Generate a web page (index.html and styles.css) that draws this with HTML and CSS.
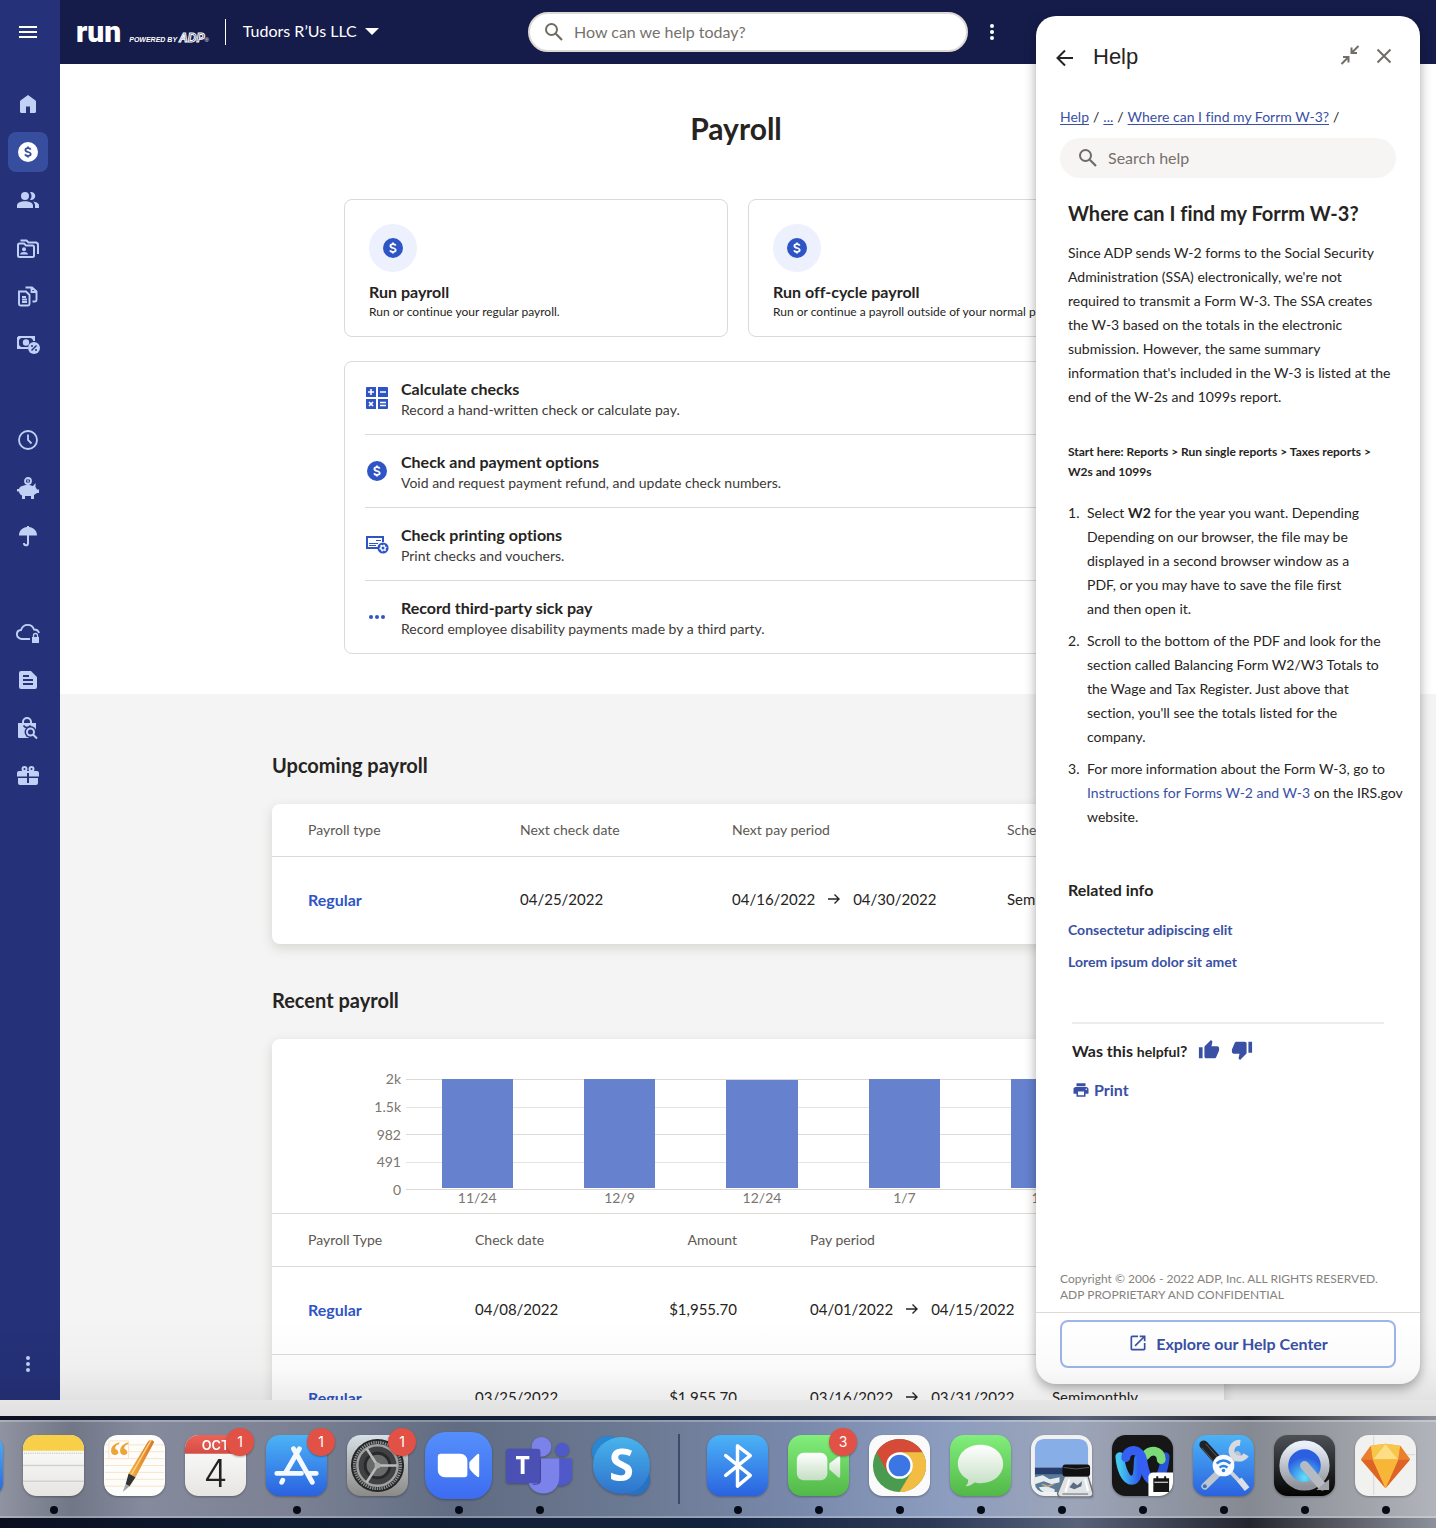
FILE: index.html
```
<!DOCTYPE html>
<html lang="en">

<head>
  <meta charset="UTF-8">
  <meta name="viewport" content="width=device-width, initial-scale=1.0">
  <title>Payroll</title>
  <link rel="stylesheet" href="styles.css">
</head>

<body>
  <!-- shared symbols and gradients -->
  <svg class="defs" width="0" height="0" aria-hidden="true">
    <symbol id="i-dollar" viewBox="0 0 24 24">
      <circle cx="12" cy="12" r="10" fill="currentColor" />
      <path d="M14.7 9.6C14.4 8.7 13.4 8.2 12 8.2c-1.500 0-2.600.6-2.600 1.800 0 2.700 5.300 1.300 5.300 4 0 1.200-1.100 1.900-2.700 1.900-1.500 0-2.600-.6-2.800-1.600M12 6.500v2M12 15.500v2" fill="none" stroke="var(--mark)" stroke-width="1.800" />
    </symbol>
    <symbol id="i-search" viewBox="0 0 24 24">
      <circle cx="9.500" cy="9.500" r="5.500" fill="none" stroke="currentColor" stroke-width="2" />
      <path d="M13.800 13.800l6.200 6.200" stroke="currentColor" stroke-width="2.200" />
    </symbol>
    <symbol id="i-dots" viewBox="0 0 24 24">
      <g fill="currentColor"><circle cx="12" cy="6" r="2" /><circle cx="12" cy="12" r="2" /><circle cx="12" cy="18" r="2" /></g>
    </symbol>
    <symbol id="i-arrow" viewBox="0 0 16 16">
      <path d="M2 8h11M8.500 3.500L13 8l-4.500 4.500" fill="none" stroke="currentColor" stroke-width="1.400" />
    </symbol>
    <symbol id="i-thumb" viewBox="0 0 24 24">
      <path d="M1 21h4V9H1v12zM23 10c0-1.100-.9-2-2-2h-6.310l.95-4.570.03-.32c0-.41-.17-.79-.44-1.060L14.170 1 7.590 7.590C7.220 7.950 7 8.450 7 9v10c0 1.100.9 2 2 2h9c.83 0 1.540-.5 1.840-1.220l3.020-7.050c.09-.23.14-.47.14-.73v-2z" fill="currentColor" />
    </symbol>
    <defs>
      <linearGradient id="g-blue" x2="0" y2="1"><stop stop-color="#4cb3f6" /><stop offset="1" stop-color="#2a62e0" /></linearGradient>
      <linearGradient id="g-zoom" x2="0" y2="1"><stop stop-color="#558ffb" /><stop offset="1" stop-color="#3d6cf1" /></linearGradient>
      <linearGradient id="g-green" x2="0" y2="1"><stop stop-color="#82ee7c" /><stop offset="1" stop-color="#52b848" /></linearGradient>
      <linearGradient id="g-white" x2="0" y2="1"><stop stop-color="#fff" /><stop offset="1" stop-color="#c4dec3" /></linearGradient>
      <linearGradient id="g-paper" x2="0" y2="1"><stop stop-color="#fff" /><stop offset="1" stop-color="#e6e5e1" /></linearGradient>
      <linearGradient id="g-steel" x2="0" y2="1"><stop stop-color="#d6e0e6" /><stop offset="1" stop-color="#8b8a86" /></linearGradient>
      <linearGradient id="g-black" x2="0" y2="1"><stop stop-color="#4d5156" /><stop offset="1" stop-color="#030303" /></linearGradient>
      <linearGradient id="g-red" x2="0" y2="1"><stop stop-color="#ed6358" /><stop offset="1" stop-color="#d44c43" /></linearGradient>
      <linearGradient id="g-skype" x2="0" y2="1"><stop stop-color="#48b4ec" /><stop offset="1" stop-color="#2f72cc" /></linearGradient>
      <linearGradient id="g-silver" x2="0" y2="1"><stop stop-color="#eaf0fb" /><stop offset="1" stop-color="#8f9298" /></linearGradient>
      <linearGradient id="g-webex" x2="1" y2="0"><stop stop-color="#45c8ef" /><stop offset="1" stop-color="#2f5ff0" /></linearGradient>
      <linearGradient id="g-pen" x2="1" y2="0"><stop stop-color="#f7b13c" /><stop offset="1" stop-color="#d5762a" /></linearGradient>
      <radialGradient id="g-aqua" cy=".8"><stop stop-color="#5fe3fb" /><stop offset="1" stop-color="#2b5fe0" /></radialGradient>
    </defs>
  </svg>

  <div class="desktop">
    <div class="window">
      <div class="app">
        <nav class="sidebar" aria-label="Main">
          <button class="nav-btn menu" aria-label="Menu">
            <svg viewBox="0 0 24 24"><path d="M3 7h18M3 12h18M3 17h18" stroke="currentColor" stroke-width="2" /></svg>
          </button>

          <div class="nav-group">
            <button class="nav-btn" aria-label="Home">
              <svg viewBox="0 0 24 24"><path d="M12 3l7.500 5.500a1.200 1.200 0 0 1 .5 1V19.500a1.500 1.500 0 0 1-1.500 1.500H14v-6.500h-4V21H5.500A1.500 1.500 0 0 1 4 19.500v-10a1.200 1.200 0 0 1 .5-1z" fill="currentColor" /></svg>
            </button>
            <button class="nav-btn active" aria-label="Payroll">
              <svg><use href="#i-dollar" /></svg>
            </button>
            <button class="nav-btn" aria-label="Employees">
              <svg viewBox="0 0 24 24"><g fill="currentColor"><circle cx="9" cy="8" r="4" /><path d="M1 20v-2.500C1 14.500 5.500 13.300 9 13.300s8 1.200 8 4.200V20zM14 4.200a4 4 0 1 1 0 7.600 6 6 0 0 0 0-7.600zM17 13.600c3 .4 6 1.700 6 3.900V20h-4v-2.500c0-1.700-.8-3-2-3.900z" /></g></svg>
            </button>
            <button class="nav-btn" aria-label="Employee files">
              <svg viewBox="0 0 24 24"><path d="M2 19.500V9a1.500 1.500 0 0 1 1.500-1.500H8l2 2h6.500A1.500 1.500 0 0 1 18 11v8.500a1.500 1.500 0 0 1-1.500 1.500h-13A1.500 1.500 0 0 1 2 19.500zM4.500 4.500h6l2 2H20A2.500 2.500 0 0 1 22 9v9" fill="none" stroke="currentColor" stroke-width="2" /><circle cx="8" cy="13.200" r="2" fill="currentColor" /><path d="M4 18.500c0-3.300 8-3.300 8 0z" fill="currentColor" /></svg>
            </button>
            <button class="nav-btn" aria-label="Documents">
              <svg viewBox="0 0 24 24"><path d="M3 20V7.500h7l3.500 3.500V20a1.500 1.500 0 0 1-1.500 1.500H4.500A1.500 1.500 0 0 1 3 20zM6 13h4M6 15.500h5M6 18h5M9.500 3.500H16l4.500 4V16a1.500 1.500 0 0 1-1.500 1.500h-2.500M15.500 3.500V8H20" fill="none" stroke="currentColor" stroke-width="1.900" /></svg>
            </button>
            <button class="nav-btn" aria-label="Taxes">
              <svg viewBox="0 0 24 24"><path d="M2 5h16v4M12 16H2V5" fill="none" stroke="currentColor" stroke-width="2" /><path d="M2 5h4L2 9zM18 5h-4l4 4zM2 16h4l-4-4z" fill="currentColor" /><circle cx="10" cy="10.500" r="3.200" fill="currentColor" /><circle cx="18" cy="16" r="6" fill="currentColor" /><path d="M15.500 18.500l5-5" stroke="#253178" stroke-width="1.500" /><circle cx="16" cy="14" r="1" fill="#253178" /><circle cx="20" cy="18" r="1" fill="#253178" /></svg>
            </button>
          </div>

          <div class="nav-group">
            <button class="nav-btn" aria-label="Time">
              <svg viewBox="0 0 24 24"><circle cx="12" cy="12" r="9" fill="none" stroke="currentColor" stroke-width="1.800" /><path d="M12 6.500V12l3.500 3.500" fill="none" stroke="currentColor" stroke-width="1.800" /></svg>
            </button>
            <button class="nav-btn" aria-label="Retirement">
              <svg viewBox="0 0 24 24"><circle cx="12" cy="5" r="3" fill="none" stroke="currentColor" stroke-width="1.800" /><path d="M13 4.200c-1.800-.8-2.400.5-1 .9s.8 1.600-1 .8" fill="none" stroke="currentColor" /><path d="M6 10c3-1.500 8-1.500 11 0l2.500-3v4l1.500 2.500h2V17h-2l-3 2v4h-3v-3H9v3H6v-3.500C4 18.500 3 17 3 15.500H1V13h2c.4-1.300 1.300-2.300 3-3z" fill="currentColor" /></svg>
            </button>
            <button class="nav-btn" aria-label="Insurance">
              <svg viewBox="0 0 24 24"><path d="M3 11.500C3 6 7 3.500 11 3V2h2v1c4 .5 8 3 8 8.500z" fill="currentColor" /><path d="M12 11v8.500c0 2.500-4 2.500-4-.5" fill="none" stroke="currentColor" stroke-width="2" /></svg>
            </button>
          </div>

          <div class="nav-group">
            <button class="nav-btn" aria-label="Secure cloud">
              <svg viewBox="0 0 24 24"><path d="M14 19H5.500C-.5 18-.5 10.500 5 10 7.500 3 16 3.500 18 9.500c3 0 4.500 1.500 5 3.500" fill="none" stroke="currentColor" stroke-width="1.900" /><path d="M16 17h7v6h-7z" fill="currentColor" /><path d="M17.500 17.500v-2a2 2 0 0 1 4 0v2" fill="none" stroke="currentColor" stroke-width="1.300" /></svg>
            </button>
            <button class="nav-btn" aria-label="Reports">
              <svg viewBox="0 0 24 24"><path d="M5 3h10l6 6v10a2 2 0 0 1-2 2H5a2 2 0 0 1-2-2V5a2 2 0 0 1 2-2zM7 7v2h6V7zM7 11v2h10v-2zM7 15v2h10v-2z" fill="currentColor" fill-rule="evenodd" /></svg>
            </button>
            <button class="nav-btn" aria-label="Hiring">
              <svg viewBox="0 0 24 24"><path d="M2 7h18v7H13v8H3a1 1 0 0 1-1-1z" fill="currentColor" /><path d="M7 9V6a4 4 0 0 1 8 0v3" fill="none" stroke="currentColor" stroke-width="2" /><path d="M7.500 9.500c1.500 2.500 5.500 2.500 7 0" stroke="#253178" stroke-width="1.500" fill="none" /><circle cx="14.500" cy="16" r="6" fill="#253178" /><circle cx="14.500" cy="16" r="3.500" fill="none" stroke="currentColor" stroke-width="2" /><path d="M17 18.500l4 4" stroke="currentColor" stroke-width="2" /></svg>
            </button>
            <button class="nav-btn" aria-label="Perks">
              <svg viewBox="0 0 24 24"><path d="M1 9a2 2 0 0 1 2-2h18a2 2 0 0 1 2 2v3.500H13V9h-2v3.500H1zM2 14h9v5h2v-5h9v5a2 2 0 0 1-2 2H4a2 2 0 0 1-2-2z" fill="currentColor" /><circle cx="8.500" cy="5" r="2" fill="none" stroke="currentColor" stroke-width="2" /><circle cx="15.500" cy="5" r="2" fill="none" stroke="currentColor" stroke-width="2" /></svg>
            </button>
          </div>

          <button class="nav-btn more" aria-label="More"><svg><use href="#i-dots" /></svg></button>
        </nav>

        <div class="content">
          <header class="topbar">
            <div class="brand">
              <a href="#" class="logo">
                <span class="logo-run">run</span>
                <span class="logo-powered">POWERED BY</span>
                <span class="logo-adp">ADP</span>
                <span class="logo-reg">®</span>
              </a>
              <button class="company">Tudors R’Us LLC <span class="caret"></span></button>
            </div>
            <label class="top-search">
              <svg><use href="#i-search" /></svg>
              <input type="search" placeholder="How can we help today?" aria-label="How can we help today?">
            </label>
            <button class="top-more" aria-label="More options"><svg><use href="#i-dots" /></svg></button>
          </header>

          <main>
            <section class="intro">
              <h1>Payroll</h1>
              <div class="cards">
                <a href="#" class="card">
                  <span class="card-icon"><svg><use href="#i-dollar" /></svg></span>
                  <strong>Run payroll</strong>
                  <small>Run or continue your regular payroll.</small>
                </a>
                <a href="#" class="card">
                  <span class="card-icon"><svg><use href="#i-dollar" /></svg></span>
                  <strong>Run off-cycle payroll</strong>
                  <small>Run or continue a payroll outside of your normal pay schedule.</small>
                </a>
              </div>
              <ul class="options">
                <li>
                  <svg viewBox="0 0 24 24"><path d="M1 2a1 1 0 0 1 1-1h9v10H1zM13 1h9a1 1 0 0 1 1 1v9H13zM1 13h10v10H2a1 1 0 0 1-1-1zM13 13h10v9a1 1 0 0 1-1 1h-9z" fill="currentColor" /><path d="M3 6h6M6 3v6M15 6h6M4 16l4 4M8 16l-4 4M15 16.500h6M15 19.500h6" stroke="#fff" stroke-width="1.600" /></svg>
                  <div><a href="#">Calculate checks</a><p>Record a hand-written check or calculate pay.</p></div>
                </li>
                <li>
                  <svg><use href="#i-dollar" /></svg>
                  <div><a href="#">Check and payment options</a><p>Void and request payment refund, and update check numbers.</p></div>
                </li>
                <li>
                  <svg viewBox="0 0 24 24"><path d="M13 16H2V5h16v5" fill="none" stroke="currentColor" stroke-width="2" /><path d="M11 8.500h5M4 11.500h9M4 13.500h7" stroke="currentColor" stroke-width="1.200" /><circle cx="18" cy="16" r="4.600" fill="#fff" stroke="currentColor" stroke-width="2" /><circle cx="18" cy="16" r="3.600" fill="none" stroke="currentColor" stroke-dasharray="1.900 1.870" stroke-width="1.500" /><circle cx="18" cy="16" r="1.500" fill="currentColor" /></svg>
                  <div><a href="#">Check printing options</a><p>Print checks and vouchers.</p></div>
                </li>
                <li>
                  <svg viewBox="0 0 24 24"><g fill="currentColor"><circle cx="6" cy="12" r="2" /><circle cx="12" cy="12" r="2" /><circle cx="18" cy="12" r="2" /></g></svg>
                  <div><a href="#">Record third-party sick pay</a><p>Record employee disability payments made by a third party.</p></div>
                </li>
              </ul>
            </section>

            <section class="history">
              <h2>Upcoming payroll</h2>
              <div class="panel">
                <table class="upcoming">
                  <thead>
                    <tr><th>Payroll type</th><th>Next check date</th><th>Next pay period</th><th>Schedule</th></tr>
                  </thead>
                  <tbody>
                    <tr>
                      <td><a href="#">Regular</a></td>
                      <td>04/25/2022</td>
                      <td><span class="period">04/16/2022 <svg><use href="#i-arrow" /></svg> 04/30/2022</span></td>
                      <td>Semimonthly</td>
                    </tr>
                  </tbody>
                </table>
              </div>

              <h2>Recent payroll</h2>
              <div class="panel">
                <div class="chart">
                  <div class="y-axis"><span>2k</span><span>1.5k</span><span>982</span><span>491</span><span>0</span></div>
                  <div class="plot">
                    <div class="bar" style="height: 100%"></div>
                    <div class="bar" style="height: 100%"></div>
                    <div class="bar" style="height: 99%"></div>
                    <div class="bar" style="height: 100%"></div>
                    <div class="bar" style="height: 100%"></div>
                  </div>
                  <div class="x-axis"><span>11/24</span><span>12/9</span><span>12/24</span><span>1/7</span><span>1/24</span></div>
                </div>
                <table class="recent">
                  <thead>
                    <tr><th>Payroll Type</th><th>Check date</th><th>Amount</th><th>Pay period</th><th>Schedule</th></tr>
                  </thead>
                  <tbody>
                    <tr>
                      <td><a href="#">Regular</a></td>
                      <td>04/08/2022</td>
                      <td>$1,955.70</td>
                      <td><span class="period">04/01/2022 <svg><use href="#i-arrow" /></svg> 04/15/2022</span></td>
                      <td>Semimonthly</td>
                    </tr>
                    <tr>
                      <td><a href="#">Regular</a></td>
                      <td>03/25/2022</td>
                      <td>$1,955.70</td>
                      <td><span class="period">03/16/2022 <svg><use href="#i-arrow" /></svg> 03/31/2022</span></td>
                      <td>Semimonthly</td>
                    </tr>
                  </tbody>
                </table>
              </div>
            </section>
          </main>
        </div>

        <aside class="help">
          <header class="help-head">
            <button aria-label="Back"><svg viewBox="0 0 24 24"><path d="M20 13H5M12 5.500L4.500 13l7.500 7.500" fill="none" stroke="currentColor" stroke-width="2" /></svg></button>
            <h2>Help</h2>
            <button class="grey" aria-label="Collapse"><svg viewBox="0 0 24 24"><path d="M5 12h5.500v5.500M10.500 12l-7 7M19 8h-5.500V2.500M13.500 8l7-7" fill="none" stroke="currentColor" stroke-width="2" /></svg></button>
            <button class="grey" aria-label="Close"><svg viewBox="0 0 24 24"><path d="M5.500 4.500l13 13M18.500 4.500l-13 13" stroke="currentColor" stroke-width="2" /></svg></button>
          </header>
          <nav class="crumbs" aria-label="Breadcrumb">
            <a href="#">Help</a><span>/</span><a href="#">...</a><span>/</span><a href="#">Where can I find my Forrm W-3?</a><span>/</span>
          </nav>
          <label class="help-search">
            <svg><use href="#i-search" /></svg>
            <input type="search" placeholder="Search help" aria-label="Search help">
          </label>

          <article>
            <h3>Where can I find my Forrm W-3?</h3>
            <p class="lead">Since ADP sends W-2 forms to the Social Security<br>
              Administration (SSA) electronically, we're not<br>
              required to transmit a Form W-3. The SSA creates<br>
              the W-3 based on the totals in the electronic<br>
              submission. However, the same summary<br>
              information that's included in the W-3 is listed at the<br>
              end of the W-2s and 1099s report.</p>
            <p class="start">Start here: Reports &gt; Run single reports &gt; Taxes reports &gt;<br>W2s and 1099s</p>
            <ol>
              <li>Select <b>W2</b> for the year you want. Depending<br>
                Depending on our browser, the file may be<br>
                displayed in a second browser window as a<br>
                PDF, or you may have to save the file first<br>
                and then open it.</li>
              <li>Scroll to the bottom of the PDF and look for the<br>
                section called Balancing Form W2/W3 Totals to<br>
                the Wage and Tax Register. Just above that<br>
                section, you'll see the totals listed for the<br>
                company.</li>
              <li>For more information about the Form W-3, go to<br>
                <a href="#">Instructions for Forms W-2 and W-3</a> on the IRS.gov<br>
                website.</li>
            </ol>
            <h4>Related info</h4>
            <ul class="related">
              <li><a href="#">Consectetur adipiscing elit</a></li>
              <li><a href="#">Lorem ipsum dolor sit amet</a></li>
            </ul>
          </article>

          <div class="feedback">
            <div class="helpful">
              <span>Was this <small>helpful</small>?</span>
              <button aria-label="Yes"><svg><use href="#i-thumb" /></svg></button>
              <button class="down" aria-label="No"><svg><use href="#i-thumb" /></svg></button>
            </div>
            <button class="print">
              <svg viewBox="0 0 24 24"><path d="M19 8H5c-1.660 0-3 1.340-3 3v6h4v4h12v-4h4v-6c0-1.660-1.340-3-3-3zm-3 11H8v-5h8v5zm3-7a1 1 0 1 1 0-2 1 1 0 0 1 0 2zM18 3H6v4h12z" fill="currentColor" /></svg>Print
            </button>
          </div>

          <p class="copyright">Copyright © 2006 - 2022 ADP, Inc. ALL RIGHTS RESERVED.<br>ADP PROPRIETARY AND CONFIDENTIAL</p>
          <footer>
            <button class="explore">
              <svg viewBox="0 0 24 24"><path d="M19 19H5V5h7V3H5a2 2 0 0 0-2 2v14c0 1.100.89 2 2 2h14c1.100 0 2-.9 2-2v-7h-2v7zM14 3v2h3.590l-9.830 9.830 1.410 1.410L19 6.410V10h2V3h-7z" fill="currentColor" /></svg>
              Explore our Help Center
            </button>
          </footer>
        </aside>
      </div>
    </div>

    <div class="dock">
      <div class="dock-item"><svg viewBox="0 0 64 64"><rect x="1" y="1" width="62" height="62" rx="14" fill="url(#g-blue)" /></svg></div>
      <!-- Notes -->
      <div class="dock-item running"><svg viewBox="0 0 64 64"><rect x="1" y="1" width="62" height="62" rx="14" fill="url(#g-paper)" /><path d="M1 17v-2A14 14 0 0 1 15 1h34a14 14 0 0 1 14 14v2z" fill="#f7cf48" /><path d="M2 19.500h60" stroke="#b7b5ad" stroke-dasharray="1 1.200" /><path d="M1 32h62M1 48h62" stroke="#d3d2cf" stroke-width="1.500" /></svg></div>
      <!-- Pages -->
      <div class="dock-item"><svg viewBox="0 0 64 64"><rect x="1" y="1" width="62" height="62" rx="14" fill="#fdfdfc" /><path d="M2 11h60M2 18h60M2 25h60M2 32h60M2 39h60M2 46h60M2 53h60" stroke="#fae3c6" /><path d="M6 7h20v18H6z" fill="#fdfdfc" stroke="#fae3c6" /><text x="6" y="37" font-family="Liberation Serif" font-weight="bold" font-size="42" fill="#efa43a">“</text><path d="M46 7q4-2 6 1L33 44l-7-4z" fill="url(#g-pen)" /><path d="M49 6L29 41" stroke="#fbd08a" stroke-width="1.500" /><path d="M26 40l7 4-6 9-4-2z" fill="#333" /><path d="M23 51l4 2-7 6z" fill="#9aa4aa" /></svg></div>
      <!-- Calendar -->
      <div class="dock-item"><svg viewBox="0 0 64 64"><rect x="1" y="1" width="62" height="62" rx="14" fill="url(#g-paper)" /><path d="M1 20v-5A14 14 0 0 1 15 1h34a14 14 0 0 1 14 14v5z" fill="url(#g-red)" /><text x="32" y="16" text-anchor="middle" font-family="Inter" font-weight="600" font-size="13" fill="#fff">OCT</text><text x="32" y="54" text-anchor="middle" font-family="Inter" font-weight="300" font-size="39" fill="#222">4</text></svg><span class="badge">1</span></div>
      <!-- App Store -->
      <div class="dock-item running"><svg viewBox="0 0 64 64"><rect x="1" y="1" width="62" height="62" rx="14" fill="url(#g-blue)" /><g stroke="#f4f8ff" stroke-width="5" stroke-linecap="round"><path d="M35 15L21 39M29 15l19 34M12 40h25M45 40h7M18 47l-1 2" /></g></svg><span class="badge">1</span></div>
      <!-- System settings -->
      <div class="dock-item"><svg viewBox="0 0 64 64"><rect x="1" y="1" width="62" height="62" rx="14" fill="url(#g-steel)" /><circle cx="32" cy="32" r="27" fill="#242527" /><circle cx="32" cy="32" r="23.500" fill="none" stroke="#8e908f" stroke-width="3" stroke-dasharray="1.400 1" /><circle cx="32" cy="32" r="20.500" fill="#3f4142" stroke="#a1a3a2" stroke-width="2.500" /><circle cx="32" cy="32" r="12.500" fill="#686a69" stroke="#29292b" stroke-width="3" /><path d="M32 32h20M32 32L21 15M32 32L21 49" stroke="#b9bbba" stroke-width="2.500" /><circle cx="32" cy="32" r="3" fill="#aaa" /></svg><span class="badge">1</span></div>
      <!-- Zoom -->
      <div class="dock-item running"><svg class="big" viewBox="0 0 68 68"><rect width="68" height="68" rx="21" fill="url(#g-zoom)" /><path d="M13 25a3 3 0 0 1 3-3h20a7 7 0 0 1 7 7v14a3 3 0 0 1-3 3H20a7 7 0 0 1-7-7zM45 31q1-2 8-8.500 2-1 2 1v21q0 2-2 1-7-6-8-9z" fill="#fff" /></svg></div>
      <!-- Teams -->
      <div class="dock-item running"><svg class="big" viewBox="0 0 68 68"><circle cx="57" cy="18" r="7" fill="#5059c9" /><path d="M52 27h14a1 1 0 0 1 1 1v16c0 8-8 12-15 10z" fill="#5059c9" /><circle cx="36" cy="15" r="10" fill="#7b83eb" /><path d="M22 27h32v19c0 22-32 22-32 0z" fill="#7b83eb" /><rect y="17" width="35" height="35" rx="3" fill="#4b50b4" /><path d="M35 27v22q0 4-4 4h-4" stroke="#3e4496" fill="none" /><text x="17" y="43" text-anchor="middle" font-family="Open Sans" font-weight="bold" font-size="25" fill="#fff">T</text></svg></div>
      <!-- Skype -->
      <div class="dock-item"><svg viewBox="0 0 64 64"><circle cx="19" cy="18" r="16" fill="#2a86d3" /><circle cx="46" cy="46" r="16" fill="#2872c6" /><circle cx="33" cy="32" r="29" fill="url(#g-skype)" /><text x="33" y="48" text-anchor="middle" font-family="Open Sans" font-weight="bold" font-size="46" fill="#fff">S</text></svg></div>
      <div class="dock-sep"></div>
      <!-- Bluetooth -->
      <div class="dock-item running"><svg viewBox="0 0 64 64"><rect x="1" y="1" width="62" height="62" rx="14" fill="url(#g-blue)" /><path d="M20 22l25 20-13 11V12l13 10-25 20" fill="none" stroke="#fff" stroke-width="3.500" stroke-linejoin="round" stroke-linecap="round" /></svg></div>
      <!-- FaceTime -->
      <div class="dock-item running"><svg viewBox="0 0 64 64"><rect x="1" y="1" width="62" height="62" rx="14" fill="url(#g-green)" /><rect x="10" y="19" width="31" height="28" rx="7" fill="url(#g-white)" /><path d="M43 30l9-7q2-1 2 1v19q0 2-2 1l-9-8z" fill="url(#g-white)" /></svg><span class="badge">3</span></div>
      <!-- Chrome -->
      <div class="dock-item running"><svg viewBox="0 0 64 64"><rect x="1" y="1" width="62" height="62" rx="14" fill="#fafafa" /><circle cx="32" cy="32" r="27" fill="#4a9b50" /><path d="M8.600 18.500A27 27 0 0 1 55.400 18.500H32L20 39z" fill="#d64a38" /><path d="M55.400 18.500A27 27 0 0 1 32 59l12-20.500L32 18.500z" fill="#f2bd42" /><circle cx="32" cy="32" r="13.500" fill="#fff" /><circle cx="32" cy="32" r="11" fill="#3b76e4" /></svg></div>
      <!-- Messages -->
      <div class="dock-item running"><svg viewBox="0 0 64 64"><rect x="1" y="1" width="62" height="62" rx="14" fill="url(#g-green)" /><path d="M32 11c13 0 23 8.500 23 19.500S45 50 32 50q-3 0-6-.7Q22 53 17 53q3-3 2.500-6.500C13 43 9 37 9 30.500 9 19.500 19 11 32 11z" fill="url(#g-white)" /></svg></div>
      <!-- Preview -->
      <div class="dock-item running"><svg viewBox="0 0 64 64"><rect x="1" y="1" width="62" height="62" rx="14" fill="#f1f1f0" /><path d="M5 34V14a9 9 0 0 1 9-9h36a9 9 0 0 1 9 9v20z" fill="#88aee8" /><path d="M5 34h54v8H5z" fill="#263d6e" /><path d="M5 41h54v9a9 9 0 0 1-9 9H14a9 9 0 0 1-9-9z" fill="#597a98" /><path d="M5 44l8-2 7 4 10-2v5l-8 2-8-3-9 3zM9 54l8-1 8 3v3H14q-3-1-5-5z" fill="#e4ecf0" /><path d="M12 51l6 2 6-2" stroke="#c2a679" stroke-width="1.500" fill="none" /><path d="M35 43h24l5 17q0 4-4 4H32q-4 0-4-4z" fill="#dfe3e6" stroke="#6d7275" stroke-width="1.500" /><path d="M40 46l-4 13M56 46l3 12" stroke="#fff" stroke-width="2" /><path d="M40 54l4-5 4 3 5-4-1 5-7 3z" fill="#5b6c82" /><path d="M33 61h26" stroke="#8b9093" stroke-width="1.500" /><rect x="33" y="31" width="28" height="12" rx="3" fill="#111" /><path d="M34 34q13 3 26 0" stroke="#555" fill="none" /></svg></div>
      <!-- Webex -->
      <div class="dock-item running"><svg viewBox="0 0 64 64"><rect x="1" y="1" width="62" height="62" rx="14" fill="#161616" /><g fill="none" stroke-width="9" stroke-linecap="round"><path d="M55 23c-1 13-5 24-12 24" stroke="#2754d8" /><path d="M35 22c5-7 16-6 16 4" stroke="#7bd978" /><path d="M9 23c1 13 6 24 12 24 8 0 6-16 7-22" stroke="url(#g-webex)" /><path d="M15 24c1-10 15-10 17 2 2 12 5 21 11 21" stroke="#345ff0" /></g><path d="M38 44a5 5 0 0 1 5-5h20v10a14 14 0 0 1-14 14H38z" fill="#fff" /><path d="M44 46h14v12H44zM47 43v4M55 43v4" fill="#161616" stroke="#161616" stroke-width="2" /><path d="M44 49h14" stroke="#fff" /></svg></div>
      <!-- Wireless utility -->
      <div class="dock-item running"><svg viewBox="0 0 64 64"><rect x="1" y="1" width="62" height="62" rx="14" fill="url(#g-blue)" /><path d="M12 11L28 29" stroke="#202326" stroke-width="9" stroke-linecap="round" /><path d="M10 14l14 16M14 10l14 16" stroke="#5a5d60" /><path d="M32 31l20 21" stroke="#cdd2d8" stroke-width="4" /><path d="M48 46l8 10" stroke="#dce0e5" stroke-width="6" /><path d="M13 53L46 21" stroke="#bfc5cd" stroke-width="7" stroke-linecap="round" /><path d="M49 9a8 8 0 1 0 6 12" fill="none" stroke="#d7dbe0" stroke-width="6" /><circle cx="13" cy="53" r="2" fill="#3b73c4" /><circle cx="32" cy="32" r="11" fill="#f8fafb" /><path d="M25 30q7-6 14 0M28 34q4-3 8 0" fill="none" stroke="#2c83e3" stroke-width="2.500" /><circle cx="32" cy="37" r="1.800" fill="#2c83e3" /></svg></div>
      <!-- QuickTime -->
      <div class="dock-item running"><svg viewBox="0 0 64 64"><rect x="1" y="1" width="62" height="62" rx="14" fill="url(#g-black)" /><circle cx="32" cy="32" r="21" fill="url(#g-aqua)" stroke="url(#g-silver)" stroke-width="9" /><path d="M32 32l18 21" stroke="#b7bbc1" stroke-width="9" stroke-linecap="round" /><path d="M44 57h13V46z" fill="#a0a4aa" /></svg></div>
      <!-- Sketch -->
      <div class="dock-item running"><svg viewBox="0 0 64 64"><rect x="1" y="1" width="62" height="62" rx="14" fill="#f1f1f0" /><path d="M20 2v60M20 21h42" stroke="#d6d6d5" /><path d="M17 12l15-2 15 2 10 14-25 29L7 26z" fill="#f1a436" /><path d="M32 10L19 26h26z" fill="#fdde84" /><path d="M17 12l15-2-13 16zM47 12l-15-2 13 16z" fill="#f8c648" /><path d="M17 12L7 26h12zM47 12l10 14H45z" fill="#ea7f30" /><path d="M7 26h12l13 29zM57 26H45L32 55z" fill="#dd6426" /><path d="M19 26h26L32 55z" fill="#f7b637" /></svg></div>
    </div>
  </div>
</body>

</html>
```
FILE: styles.css
```
* {
  box-sizing: border-box;
}

body {
  margin: 0;
  font-family: Lato, "Open Sans", sans-serif;
  font-size: 14px;
  font-variant-ligatures: none;
  color: #262422;
}

h1, h2, h3, h4, p, ul, ol {
  margin: 0;
  padding: 0;
}

ul {
  list-style: none;
}

a {
  color: inherit;
  text-decoration: none;
}

button, input {
  font: inherit;
  color: inherit;
  background: none;
  border: 0;
  padding: 0;
}

input:focus {
  outline: none;
}

svg {
  display: block;
  width: 24px;
  height: 24px;
  flex: none;
}

.defs {
  position: absolute;
  width: 0;
  height: 0;
}

.desktop {
  height: 100vh;
  display: flex;
  flex-direction: column;
  overflow: hidden;
  background: linear-gradient(90deg, #0b1020, #101c33 20%, #14233d 50%, #2c3a58 65%, #59627a 75%, #23252e 87%, #8d919b);
}

.window {
  position: relative;
  flex: 1;
  min-height: 0;
  display: flex;
  padding-bottom: 16px;
  background: #f9f9f9;
}

/* shade cast over the foot of the window */
.window::after {
  content: "";
  position: absolute;
  left: 0;
  right: 0;
  bottom: 0;
  height: 96px;
  background: linear-gradient(rgba(0, 0, 0, 0), rgba(0, 0, 0, .02) 50%, rgba(0, 0, 0, .1));
  pointer-events: none;
}

.app {
  position: relative;
  flex: 1;
  display: flex;
  overflow: hidden;
}

/* sidebar */
.sidebar {
  flex: none;
  width: 60px;
  padding: 12px 12px 16px 8px;
  display: flex;
  flex-direction: column;
  background: #253178;
  color: #c0d1f5;
  --mark: #374e9e;
}

.nav-btn {
  width: 40px;
  height: 40px;
  flex: none;
  display: flex;
  align-items: center;
  justify-content: center;
  border-radius: 8px;
}

.nav-btn.menu {
  color: #fff;
  margin-bottom: 32px;
}

.nav-btn.active {
  background: #374e9e;
  color: #fff;
}

.nav-group {
  display: flex;
  flex-direction: column;
  gap: 8px;
  margin-bottom: 56px;
}

.nav-btn.more {
  margin-top: auto;
}

/* top bar */
.content {
  flex: 1;
  min-width: 0;
}

.topbar {
  height: 64px;
  display: grid;
  grid-template-columns: 1fr 440px 1fr;
  align-items: center;
  background: #151c4a;
  color: #fff;
}

.brand, .logo, .company {
  display: flex;
  align-items: center;
}

.logo {
  height: 26px;
  padding: 0 16px;
  align-items: baseline;
  line-height: 26px;
  border-right: 1px solid #fff;
  font-family: "Liberation Sans", Arial, sans-serif;
}

.logo-run {
  font-family: Roboto, sans-serif;
  font-weight: 900;
  font-size: 30px;
  margin-right: 8px;
}

.logo-powered {
  font-size: 7px;
  font-weight: bold;
  font-style: italic;
  margin-right: 2px;
}

.logo-adp {
  font-size: 12px;
  font-weight: bold;
  font-style: italic;
  color: transparent;
  -webkit-text-stroke: 1px #fff;
}

.logo-reg {
  font-size: 6px;
}

.company {
  gap: 8px;
  margin-left: 17px;
  font-size: 16px;
  line-height: 20px;
  padding-bottom: 2px;
}

.caret {
  border: 7px solid transparent;
  border-top-color: #fff;
  border-bottom: 0;
}

.top-search {
  height: 40px;
  padding: 0 12px;
  display: flex;
  align-items: center;
  gap: 8px;
  border: 2px solid #dcd9d6;
  border-radius: 20px;
  background: #fff;
  color: #6f6b65;
  font-size: 16px;
}

.top-search input, .help-search input {
  flex: 1;
  min-width: 0;
  padding-bottom: 2px;
}

input::placeholder {
  color: #76716b;
  opacity: 1;
}

.top-more {
  margin-left: 12px;
  justify-self: start;
}

/* payroll actions */
.intro {
  padding: 47px 0 40px;
  background: #fff;
}

.intro h1 {
  margin-bottom: 54px;
  padding-right: 24px;
  text-align: center;
  font-size: 30px;
  line-height: 34px;
}

.cards, .options {
  width: 808px;
  margin: 0 auto;
}

.cards {
  display: flex;
  gap: 20px;
  padding-right: 20px;
  margin-bottom: 24px;
  --mark: #fff;
}

.card {
  flex: 1;
  min-width: 0;
  padding: 24px 24px 16px;
  border: 1px solid #dddad5;
  border-radius: 8px;
}

.card-icon {
  width: 48px;
  height: 48px;
  margin-bottom: 8px;
  display: flex;
  align-items: center;
  justify-content: center;
  border-radius: 50%;
  background: #edf1fd;
  color: #2f55c4;
}

.card strong, .card small {
  display: block;
  white-space: nowrap;
}

.card strong {
  font-size: 16px;
  line-height: 24px;
}

.card small {
  font-size: 12px;
  line-height: 16px;
}

.options {
  padding: 0 20px;
  border: 1px solid #dddad5;
  border-radius: 8px;
  --mark: #fff;
}

.options li {
  display: flex;
  gap: 12px;
  padding: 16px 0 14px;
  border-bottom: 1px solid #dddad5;
}

.options li:last-child {
  border-bottom: 0;
}

.options svg {
  margin-top: 8px;
  color: #2f55c4;
}

.options a {
  display: block;
  font-size: 16px;
  font-weight: bold;
  line-height: 22px;
}

.options p {
  line-height: 20px;
  color: #3d3a37;
}

/* payroll tables */
.history {
  min-height: 800px;
  padding: 56px 0;
  background: #f4f4f4;
}

.history h2, .panel {
  width: 952px;
  margin: 0 auto;
}

.history h2 {
  margin-bottom: 24px;
  font-size: 20px;
  line-height: 30px;
}

.panel {
  margin-bottom: 41px;
  border-radius: 8px;
  background: #fff;
  box-shadow: 0 4px 12px rgba(60, 55, 40, .16);
}

table {
  width: 100%;
  table-layout: fixed;
  border-collapse: collapse;
  text-align: left;
}

th {
  height: 52px;
  padding: 0;
  border-bottom: 1px solid #dddad5;
  font-weight: normal;
  color: #5c5853;
}

td {
  height: 88px;
  padding: 0 0 2px;
  font-size: 15px;
}

th:first-child, td:first-child {
  padding-left: 36px;
}

td a {
  font-size: 16px;
  font-weight: bold;
  color: #2f55c4;
}

.upcoming th:nth-child(1) {
  width: 248px;
}

.upcoming th:nth-child(2) {
  width: 212px;
}

.upcoming th:nth-child(3) {
  width: 275px;
}

.recent th:nth-child(1) {
  width: 203px;
}

.recent th:nth-child(2) {
  width: 150px;
}

.recent th:nth-child(3) {
  width: 112px;
}

.recent th:nth-child(4) {
  width: 315px;
}

.recent th:nth-child(3), .recent td:nth-child(3) {
  text-align: right;
}

.recent th:nth-child(4), .recent td:nth-child(4) {
  padding-left: 73px;
}

.recent td {
  border-bottom: 1px solid #dddad5;
}

.period {
  display: flex;
  align-items: center;
  gap: 11px;
}

.period svg {
  width: 16px;
  height: 16px;
}

/* chart */
.chart {
  display: grid;
  grid-template-columns: 129px 1fr;
  column-gap: 5px;
  padding: 40px 106px 7px 0;
  border-bottom: 1px solid #dddad5;
  color: #7b7670;
}

.y-axis {
  height: 129px;
  margin: -9px 0;
  display: flex;
  flex-direction: column;
  justify-content: space-between;
  text-align: right;
  line-height: 18px;
}

.plot {
  height: 111px;
  display: flex;
  align-items: flex-end;
  justify-content: space-around;
  padding-bottom: 2px;
  background:
    linear-gradient(#dddad5, #dddad5) 0 0 / 100% 1px no-repeat,
    linear-gradient(#e6e4e0, #e6e4e0) 0 25% / 100% 1px no-repeat,
    linear-gradient(#dddad5, #dddad5) 0 50% / 100% 1px no-repeat,
    linear-gradient(#e6e4e0, #e6e4e0) 0 75% / 100% 1px no-repeat,
    linear-gradient(#dddad5, #dddad5) 0 100% / 100% 1px no-repeat;
}

.bar {
  width: 10%;
  background: #6682cf;
}

.x-axis {
  grid-column: 2;
  display: flex;
  line-height: 16px;
}

.x-axis span {
  flex: 1;
  text-align: center;
}

/* help panel, floats over the page */
.help {
  position: absolute;
  top: 16px;
  right: 16px;
  bottom: 16px;
  width: 384px;
  display: flex;
  flex-direction: column;
  border-radius: 20px;
  background: #fff;
  box-shadow: 0 4px 12px rgba(0, 0, 0, .35);
  white-space: nowrap;
}

.help-head {
  display: flex;
  align-items: center;
  padding: 22px 24px 0 17px;
  margin-bottom: 31px;
}

.help-head h2 {
  flex: 1;
  margin-left: 16px;
  font-family: "Liberation Sans", Arial, sans-serif;
  font-size: 22px;
  font-weight: normal;
  line-height: 38px;
}

.help-head .grey {
  margin-left: 10px;
  color: #716d67;
}

.crumbs {
  display: flex;
  gap: 4px;
  padding: 0 24px;
  margin-bottom: 11px;
  line-height: 20px;
}

.crumbs a {
  color: #3950a5;
  text-decoration: underline;
  text-decoration-thickness: 1px;
  text-underline-offset: 2px;
}

.help-search {
  height: 40px;
  margin: 0 24px;
  padding: 0 16px;
  display: flex;
  flex: none;
  align-items: center;
  gap: 8px;
  border-radius: 20px;
  background: #f6f5f4;
  color: #6f6b65;
  font-size: 16px;
}

article {
  padding: 20px 0 0 32px;
}

article h3 {
  margin-bottom: 13px;
  font-size: 20px;
  line-height: 30px;
}

.lead, article ol {
  line-height: 24px;
}

.start {
  margin: 33px 0 19px;
  font-size: 12px;
  font-weight: bold;
  line-height: 20px;
}

article ol {
  padding-left: 19px;
}

article ol li {
  margin-bottom: 8px;
  list-style: none;
  counter-increment: step;
}

article ol li::before {
  content: counter(step) ".";
  float: left;
  margin-left: -19px;
}

article ol a {
  color: #3950a5;
}

article h4 {
  margin: 49px 0 12px;
  font-size: 16px;
  line-height: 24px;
}

.related a {
  font-weight: bold;
  line-height: 32px;
  color: #3950a5;
}

.feedback {
  margin: 44px 36px 0;
  padding-top: 14px;
  border-top: 2px solid #edecea;
  font-size: 16px;
  font-weight: bold;
}

.helpful {
  display: flex;
  align-items: center;
  gap: 11px;
  height: 24px;
  margin-bottom: 16px;
}

.helpful small {
  font-size: 14px;
}

.helpful button, .print {
  color: #3950a5;
}

.helpful svg {
  width: 22px;
  height: 22px;
}

.down svg {
  transform: rotate(180deg);
}

.print {
  display: flex;
  align-items: center;
  gap: 4px;
  line-height: 24px;
}

.print svg {
  width: 18px;
  height: 18px;
}

.copyright {
  margin-top: auto;
  padding: 0 24px 9px;
  font-size: 12px;
  line-height: 16px;
  color: #86827d;
}

.help footer {
  padding: 7px 24px 16px;
  border-top: 1px solid #dddad5;
}

.explore {
  width: 100%;
  height: 48px;
  padding-bottom: 2px;
  display: flex;
  align-items: center;
  justify-content: center;
  gap: 8px;
  border: 2px solid #9db5ea;
  border-radius: 8px;
  font-size: 16px;
  font-weight: bold;
  color: #3950a5;
}

.explore svg {
  width: 20px;
  height: 20px;
}

/* dock */
.dock {
  flex: none;
  height: 98px;
  margin: 4px 0 10px;
  padding-right: 10px;
  display: flex;
  justify-content: flex-end;
  border: solid rgba(255, 255, 255, .25);
  border-width: 2px 0;
  background: linear-gradient(90deg, #9093a0, #717787 5%, #858b9d 10%, #7c8294 20%, #606c82 32%, #6d7a94 45%, #7888aa 55%, #8d9dbf 66%, #9ca5b8 75%, #858991 87%, #b1b4ba);
}

.dock-item {
  position: relative;
  flex: none;
  width: 81px;
  padding-top: 12px;
  display: flex;
  justify-content: center;
}

.dock-item svg {
  width: 63px;
  height: 63px;
  filter: drop-shadow(0 1px 1px rgba(0, 0, 0, .3));
}

.dock-item .big {
  width: 67px;
  height: 67px;
  margin-top: -2px;
}

.running::after {
  content: "";
  position: absolute;
  left: 50%;
  bottom: 2px;
  width: 8px;
  height: 8px;
  margin-left: -4px;
  border-radius: 50%;
  background: #060b18;
}

.badge {
  position: absolute;
  top: 6px;
  right: 2px;
  width: 28px;
  height: 28px;
  border-radius: 50%;
  background: #e25145;
  color: #fff;
  font: 14px/28px Inter, sans-serif;
  text-align: center;
  box-shadow: 0 1px 2px rgba(0, 0, 0, .3);
}

.dock-sep {
  flex: none;
  width: 2px;
  margin: 12px 17px;
  background: #3d4a69;
}
```
